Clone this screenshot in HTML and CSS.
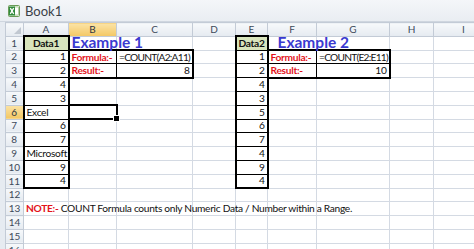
FILE: index.html
```html
<!DOCTYPE html>
<html lang="en">

<head>
    <meta charset="UTF-8">
    <title>Book1</title>
    <link rel="stylesheet" href="styles.css">
</head>

<body>
    <div class="titlebar">
        <svg class="xl-icon" width="12" height="12" viewBox="0 0 12 12">
            <rect x="0.5" y="0.5" width="11" height="11" rx="1" fill="#e8f2e0" stroke="#6a9a58" />
            <rect x="6" y="2" width="4.5" height="8" fill="#fff" stroke="#8ab27a" stroke-width="0.6" />
            <rect x="1" y="1.5" width="6" height="9" fill="#2f8a3a" />
            <path d="M2.3 3.2 L5.7 8.8 M5.7 3.2 L2.3 8.8" stroke="#fff" stroke-width="1.3" />
        </svg>
        <span class="book-name">Book1</span>
    </div>

    <div class="sheet">
        <table class="grid">
            <colgroup>
                <col class="c-rh">
                <col class="c-a">
                <col class="c-b">
                <col class="c-c">
                <col class="c-d">
                <col class="c-e">
                <col class="c-f">
                <col class="c-g">
                <col class="c-h">
                <col class="c-i">
            </colgroup>
            <tr class="col-heads">
                <th class="corner"><span class="corner-tri"></span></th>
                <th>A</th>
                <th class="sel-head">B</th>
                <th>C</th>
                <th>D</th>
                <th>E</th>
                <th>F</th>
                <th>G</th>
                <th>H</th>
                <th>I</th>
            </tr>
            <tr>
                <th class="rh">1</th>
                <td class="bk tt tl tr data-head">Data1</td>
                <td class="example ex1">Example 1</td>
                <td></td>
                <td></td>
                <td class="bk tt tl tr data-head">Data2</td>
                <td class="example ex2">Example 2</td>
                <td></td>
                <td></td>
                <td></td>
            </tr>
            <tr>
                <th class="rh">2</th>
                <td class="bk tl tr num">1</td>
                <td class="bk tt tl label">Formula:-</td>
                <td class="bk tt tr formula">=COUNT(A2:A11)</td>
                <td></td>
                <td class="bk tl tr num">1</td>
                <td class="bk tt tl label">Formula:-</td>
                <td class="bk tt tr formula">=COUNT(E2:E11)</td>
                <td></td>
                <td></td>
            </tr>
            <tr>
                <th class="rh">3</th>
                <td class="bk tl tr num">2</td>
                <td class="bk tb tl label">Result:-</td>
                <td class="bk tb tr num">8</td>
                <td></td>
                <td class="bk tl tr num">2</td>
                <td class="bk tb tl label">Result:-</td>
                <td class="bk tb tr num">10</td>
                <td></td>
                <td></td>
            </tr>
            <tr>
                <th class="rh">4</th>
                <td class="bk tl tr num">4</td>
                <td></td>
                <td></td>
                <td></td>
                <td class="bk tl tr num">4</td>
                <td></td>
                <td></td>
                <td></td>
                <td></td>
            </tr>
            <tr>
                <th class="rh">5</th>
                <td class="bk tl tr num">3</td>
                <td></td>
                <td></td>
                <td></td>
                <td class="bk tl tr num">3</td>
                <td></td>
                <td></td>
                <td></td>
                <td></td>
            </tr>
            <tr>
                <th class="rh sel-head">6</th>
                <td class="bk tl tr">Excel</td>
                <td class="active"><span class="fill-handle"></span></td>
                <td></td>
                <td></td>
                <td class="bk tl tr num">5</td>
                <td></td>
                <td></td>
                <td></td>
                <td></td>
            </tr>
            <tr>
                <th class="rh">7</th>
                <td class="bk tl tr num">6</td>
                <td></td>
                <td></td>
                <td></td>
                <td class="bk tl tr num">6</td>
                <td></td>
                <td></td>
                <td></td>
                <td></td>
            </tr>
            <tr>
                <th class="rh">8</th>
                <td class="bk tl tr num">7</td>
                <td></td>
                <td></td>
                <td></td>
                <td class="bk tl tr num">7</td>
                <td></td>
                <td></td>
                <td></td>
                <td></td>
            </tr>
            <tr>
                <th class="rh">9</th>
                <td class="bk tl tr">Microsoft</td>
                <td></td>
                <td></td>
                <td></td>
                <td class="bk tl tr num">4</td>
                <td></td>
                <td></td>
                <td></td>
                <td></td>
            </tr>
            <tr>
                <th class="rh">10</th>
                <td class="bk tl tr num">9</td>
                <td></td>
                <td></td>
                <td></td>
                <td class="bk tl tr num">9</td>
                <td></td>
                <td></td>
                <td></td>
                <td></td>
            </tr>
            <tr>
                <th class="rh">11</th>
                <td class="bk tl tr tb num">4</td>
                <td></td>
                <td></td>
                <td></td>
                <td class="bk tl tr tb num">4</td>
                <td></td>
                <td></td>
                <td></td>
                <td></td>
            </tr>
            <tr>
                <th class="rh">12</th>
                <td></td>
                <td></td>
                <td></td>
                <td></td>
                <td></td>
                <td></td>
                <td></td>
                <td></td>
                <td></td>
            </tr>
            <tr>
                <th class="rh">13</th>
                <td><span class="note">NOTE:-</span> COUNT Formula counts only Numeric Data / Number within a Range.</td>
                <td></td>
                <td></td>
                <td></td>
                <td></td>
                <td></td>
                <td></td>
                <td></td>
                <td></td>
            </tr>
            <tr>
                <th class="rh">14</th>
                <td></td>
                <td></td>
                <td></td>
                <td></td>
                <td></td>
                <td></td>
                <td></td>
                <td></td>
                <td></td>
            </tr>
            <tr>
                <th class="rh">15</th>
                <td></td>
                <td></td>
                <td></td>
                <td></td>
                <td></td>
                <td></td>
                <td></td>
                <td></td>
                <td></td>
            </tr>
            <tr>
                <th class="rh">16</th>
                <td></td>
                <td></td>
                <td></td>
                <td></td>
                <td></td>
                <td></td>
                <td></td>
                <td></td>
                <td></td>
            </tr>
        </table>
    </div>
</body>

</html>
```

FILE: styles.css
```css
/* page */
html,
body {
    margin: 0;
    width: 474px;
    height: 249px;
    overflow: hidden;
    background-color: #fff;
    font-family: Lato, "Liberation Sans", sans-serif;
}

/* window title */
.titlebar {
    display: flex;
    align-items: center;
    gap: 5px;
    height: 22px;
    padding-left: 8px;
    box-sizing: border-box;
    background: linear-gradient(#f4f6f9, #e9edf2);
    border-bottom: 1px solid #cfd6df;
}

.book-name {
    font-size: 13px;
    color: #3a3f47;
}

/* sheet */
.sheet {
    padding-left: 5px;
    background-color: #e6ebf1;
}

.grid {
    border-collapse: collapse;
    table-layout: fixed;
    width: 488px;
    background-color: #fff;
    font-size: 10.2px;
    letter-spacing: -0.3px;
    color: #111;
}

.c-rh { width: 18px; }
.c-a { width: 45px; }
.c-b { width: 48px; }
.c-c { width: 76px; }
.c-d { width: 43px; }
.c-e { width: 32px; }
.c-f { width: 49px; }
.c-g { width: 73px; }
.c-h { width: 44px; }
.c-i { width: 60px; }

.grid tr {
    height: 13.8px;
}

.grid td {
    padding: 0 2px;
    line-height: 11px;
    border: 1px solid #d4dae3;
    white-space: nowrap;
    overflow: visible;
    text-align: left;
}

/* headings */
.grid th {
    padding: 0;
    line-height: 11px;
    font-weight: normal;
    font-size: 10px;
    letter-spacing: 0;
    color: #3d4a5a;
    background: linear-gradient(#f7f9fb, #e5eaf0);
    border: 1px solid #c3cbd6;
    text-align: center;
}

.grid .sel-head {
    background: linear-gradient(#fbe3a6, #f3c763);
    color: #2e3440;
}

.corner {
    position: relative;
}

.corner-tri {
    position: absolute;
    right: 2px;
    bottom: 2px;
    width: 0;
    height: 0;
    border-left: 7px solid transparent;
    border-bottom: 7px solid #c1c8d1;
}

/* cell formats */
.grid td.bk {
    border: 1px solid #000;
}

.grid td.tt { border-top: 2px solid #000; }
.grid td.tb { border-bottom: 2px solid #000; }
.grid td.tl { border-left: 2px solid #000; }
.grid td.tr { border-right: 2px solid #000; }

.grid td.num {
    text-align: right;
}

.grid td.formula {
    letter-spacing: -0.75px;
}

.grid td.data-head {
    background-color: #d8e4bc;
    font-weight: bold;
    text-align: center;
}

.label {
    color: #e3131b;
    font-weight: bold;
}

.example {
    color: #3a3ad0;
    font-weight: bold;
    font-size: 15.5px;
    letter-spacing: 0;
}

.ex1 {
    padding-left: 5px;
}

.grid td.ex2 {
    padding-left: 9px;
}

.note {
    color: #e3131b;
    font-weight: bold;
}

/* active cell */
.grid td.active {
    position: relative;
    border: 2px solid #000;
}

.fill-handle {
    position: absolute;
    right: -4px;
    bottom: -4px;
    width: 5px;
    height: 5px;
    background-color: #000;
    border: 1px solid #fff;
}
```
